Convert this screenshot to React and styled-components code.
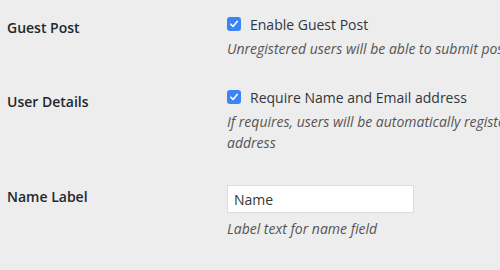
import React from "react";
import styled, { createGlobalStyle } from "styled-components";

const Global = createGlobalStyle`
  html, body {
    margin: 0;
    background: #ededed;
    overflow: hidden;
  }
  body {
    font-family: "Open Sans", "Noto Sans", sans-serif;
    color: #444;
  }
`;

const Table = styled.div`
  width: 900px;
  padding-left: 7px;
`;

const Row = styled.div`
  display: grid;
  grid-template-columns: 220px 1fr;
  padding: 14px 0;
`;

const Label = styled.div`
  font-size: 14px;
  font-weight: 600;
  line-height: 18px;
  color: #23282d;
  padding-top: ${(p) => p.$top}px;
`;

const Field = styled.div`
  display: flex;
  flex-direction: column;
  align-items: flex-start;
  max-width: 550px;
`;

const CheckLine = styled.label`
  display: flex;
  align-items: center;
  height: 20px;
  font-size: 14px;
  color: #32373c;
`;

const Box = styled.span`
  width: 14px;
  height: 14px;
  border-radius: 3px;
  background: #3b84f6;
  margin-right: 9px;
  display: flex;
  align-items: center;
  justify-content: center;
`;

const Description = styled.p`
  margin: ${(p) => p.$gap ?? 4}px 0 0;
  font-size: 14px;
  font-style: italic;
  line-height: 21px;
  color: #555;
`;

const TextInput = styled.input`
  box-sizing: border-box;
  width: 187px;
  height: 28px;
  margin: 4px 0 0;
  padding: 0 6px;
  border: 1px solid #dcdcdc;
  background: #fff;
  font-family: "Open Sans", "Noto Sans", sans-serif;
  font-size: 14px;
  color: #32373c;
  outline: none;
`;

function Check({ children }) {
  return (
    <CheckLine>
      <Box>
        <svg width="10" height="10" viewBox="0 0 10 10">
          <path d="M1.8 5.2 L4 7.4 L8.2 2.4" fill="none" stroke="#fff" strokeWidth="1.6" strokeLinecap="round" strokeLinejoin="round" />
        </svg>
      </Box>
      {children}
    </CheckLine>
  );
}

export default function App() {
  return (
    <Table>
      <Global />
      <Row>
        <Label $top={4.5}>Guest Post</Label>
        <Field>
          <Check>Enable Guest Post</Check>
          <Description>Unregistered users will be able to submit posts</Description>
        </Field>
      </Row>
      <Row>
        <Label $top={5.5}>User Details</Label>
        <Field>
          <Check>Require Name and Email address</Check>
          <Description>
            If requires, users will be automatically registered to the site using the name and email address
          </Description>
        </Field>
      </Row>
      <Row>
        <Label $top={7}>Name Label</Label>
        <Field>
          <TextInput defaultValue="Name" />
          <Description $gap={5}>Label text for name field</Description>
        </Field>
      </Row>
    </Table>
  );
}
